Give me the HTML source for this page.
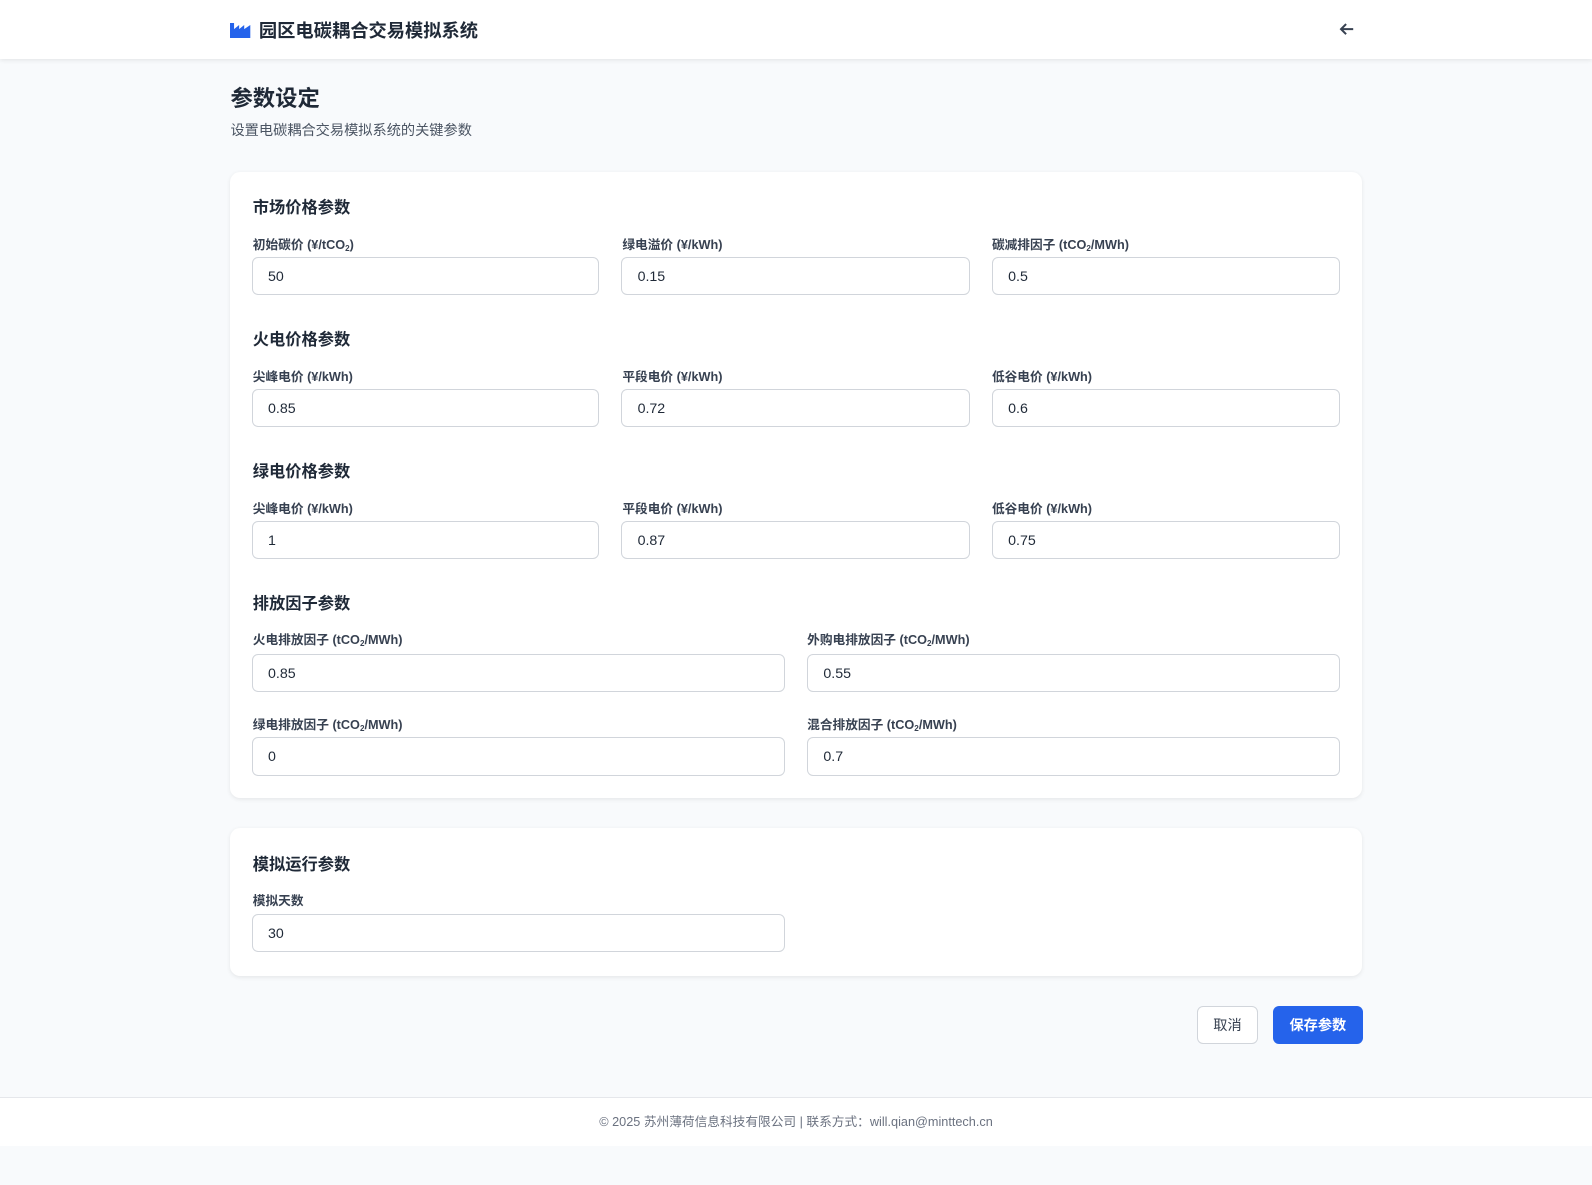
<!DOCTYPE html>
<html><head><meta charset="utf-8"><style>
*{box-sizing:border-box;margin:0;padding:0}
body{width:1592px;height:1185px;background:#f8fafc;font-family:"Liberation Sans","Noto Sans CJK SC",sans-serif;color:#1f2937;overflow:hidden}
#w{zoom:1.0153;width:1568px;height:1167px;position:relative}
.hdr{position:absolute;left:0;top:0;width:1568px;height:58px;background:#fff;box-shadow:0 2px 4px rgba(0,0,0,.08)}
.logo{position:absolute;left:227px;top:17px;font-size:18px;font-weight:700;color:#1f2937;display:flex;align-items:center;gap:8px}
.back{position:absolute;left:1319px;top:21px}
h1{position:absolute;left:227px;top:80px;font-size:22px;font-weight:700;color:#1f2937}
.sub{position:absolute;left:227px;top:118px;font-size:14px;color:#4b5563}
.card{position:absolute;left:227px;width:1114px;background:#fff;border-radius:10px;box-shadow:0 1px 4px rgba(0,0,0,.08)}
.h{position:absolute;left:22px;font-size:16px;font-weight:700;color:#1f2937;margin-top:-3px}
.l{position:absolute;font-size:12.5px;color:#374151;font-weight:600;margin-top:-2px}
.i{position:absolute;height:38px;border:1px solid #d1d5db;border-radius:6px;font-size:14px;color:#1f2937;padding:11px 15px;line-height:16px}
sub{font-size:8px;vertical-align:-2px}
.btn{position:absolute;top:991px;height:37px;border-radius:6px;font-size:14px;display:flex;align-items:center;justify-content:center}
.foot{position:absolute;left:0;top:1080px;width:1568px;height:49px;background:#fff;border-top:1px solid #e5e7eb;font-size:12.5px;color:#6b7280;text-align:center;line-height:48px}
</style></head><body><div id="w">
<div class="hdr">
<div class="logo"><svg width="20" height="16" viewBox="0 0 20 16"><path d="M0 16V1h4v6l5-4v4l5-4v4l6-4v13z" fill="#2563eb"/></svg>园区电碳耦合交易模拟系统</div>
<svg class="back" width="16" height="16" viewBox="0 0 16 16"><path d="M14 8H2M7 3L2 8l5 5" stroke="#374151" stroke-width="2" fill="none"/></svg>
</div>
<h1>参数设定</h1>
<div class="sub">设置电碳耦合交易模拟系统的关键参数</div>

<div class="card" style="top:169px;height:617px">
<div class="h" style="top:25px">市场价格参数</div>
<div class="l" style="left:22px;top:63px">初始碳价 (¥/tCO<sub>2</sub>)</div><div class="i" style="left:21px;top:84px;width:342px">50</div>
<div class="l" style="left:386px;top:63px">绿电溢价 (¥/kWh)</div><div class="i" style="left:385px;top:84px;width:343px">0.15</div>
<div class="l" style="left:750px;top:63px">碳减排因子 (tCO<sub>2</sub>/MWh)</div><div class="i" style="left:750px;top:84px;width:343px">0.5</div>

<div class="h" style="top:155px">火电价格参数</div>
<div class="l" style="left:22px;top:193px">尖峰电价 (¥/kWh)</div><div class="i" style="left:21px;top:214px;width:342px">0.85</div>
<div class="l" style="left:386px;top:193px">平段电价 (¥/kWh)</div><div class="i" style="left:385px;top:214px;width:343px">0.72</div>
<div class="l" style="left:750px;top:193px">低谷电价 (¥/kWh)</div><div class="i" style="left:750px;top:214px;width:343px">0.6</div>

<div class="h" style="top:285px">绿电价格参数</div>
<div class="l" style="left:22px;top:323px">尖峰电价 (¥/kWh)</div><div class="i" style="left:21px;top:344px;width:342px">1</div>
<div class="l" style="left:386px;top:323px">平段电价 (¥/kWh)</div><div class="i" style="left:385px;top:344px;width:343px">0.87</div>
<div class="l" style="left:750px;top:323px">低谷电价 (¥/kWh)</div><div class="i" style="left:750px;top:344px;width:343px">0.75</div>

<div class="h" style="top:415px">排放因子参数</div>
<div class="l" style="left:22px;top:453px">火电排放因子 (tCO<sub>2</sub>/MWh)</div><div class="i" style="left:21px;top:475px;width:525px">0.85</div>
<div class="l" style="left:568px;top:453px">外购电排放因子 (tCO<sub>2</sub>/MWh)</div><div class="i" style="left:568px;top:475px;width:525px">0.55</div>
<div class="l" style="left:22px;top:536px">绿电排放因子 (tCO<sub>2</sub>/MWh)</div><div class="i" style="left:21px;top:557px;width:525px">0</div>
<div class="l" style="left:568px;top:536px">混合排放因子 (tCO<sub>2</sub>/MWh)</div><div class="i" style="left:568px;top:557px;width:525px">0.7</div>
</div>

<div class="card" style="top:816px;height:145px">
<div class="h" style="top:25px">模拟运行参数</div>
<div class="l" style="left:22px;top:63px">模拟天数</div><div class="i" style="left:21px;top:84px;width:525px">30</div>
</div>

<div class="btn" style="left:1179px;width:60px;background:#fff;border:1px solid #d1d5db;color:#374151">取消</div>
<div class="btn" style="left:1254px;width:88px;background:#2563eb;color:#fff;font-weight:600">保存参数</div>

<div class="foot">© 2025 苏州薄荷信息科技有限公司 | 联系方式：will.qian@minttech.cn</div>
</div></body></html>
